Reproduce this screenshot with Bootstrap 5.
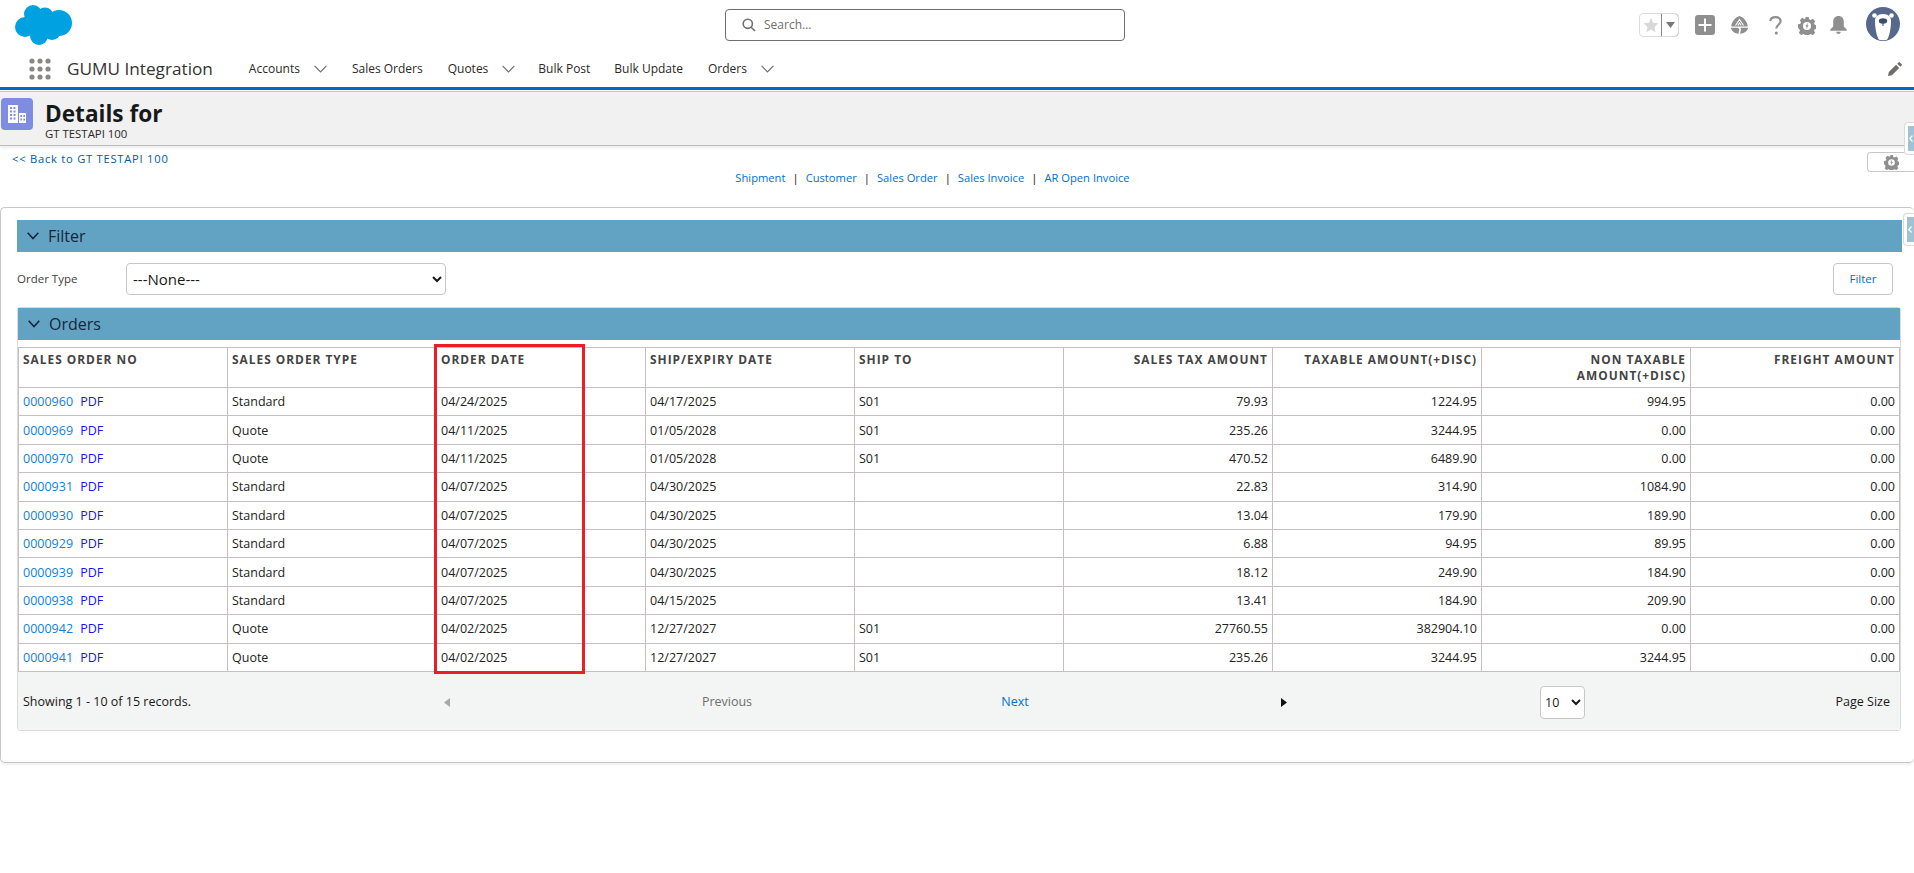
<!DOCTYPE html>
<html lang="en">
<head>
<meta charset="utf-8">
<title>Details for GT TESTAPI 100</title>
<link href="https://cdn.jsdelivr.net/npm/bootstrap@5.3.0/dist/css/bootstrap.min.css" rel="stylesheet">
<style>
html,body{background:#fff;overflow-x:hidden}
body{font-family:"Open Sans","Noto Sans",sans-serif;font-size:12.5px;color:#181818;position:relative;min-height:873px}
a{text-decoration:none}
.top-strip{height:50px;padding:5px 14px 0 15px}
.search-box{width:400px;height:32px;margin:4px 0 0 653px;border:1px solid #706e6b;border-radius:4px;padding-left:16px;color:#706e6b;font-size:12px;gap:8px}
.tools{margin-left:auto;height:40px}
.fav-box{width:40px;height:24px;border:1px solid #dddbda;border-radius:4px;margin:8px 16px 0 0;overflow:hidden}
.fav-box>span{flex:1 1 0}
.fav-box>span+span{border:1px solid #8a8886;border-radius:0 4px 4px 0;width:18px;flex:0 0 18px;margin:-1px -1px -1px 0}
.tool-gap{margin-top:10px}
.app-nav{height:40px;padding:0 12px 0 29px;border-bottom:3px solid #0066cc;color:#2b2826}
.app-name{font-size:17.2px;margin:0 36px 0 16px;color:#333}
.nav-entry{font-size:12px;color:#2b2826;margin-right:25px;white-space:nowrap}
.nav-entry svg{margin-left:14px}
.nav-tight{margin-right:23px}
.nav-tight-post{margin-right:24px}
.page-head{height:55px;margin-top:1px;background:#f1f1f1;border-top:1px solid #c9c7c5;border-bottom:1px solid #c0bebc;box-shadow:0 2px 3px rgba(0,0,0,.08);padding:6px 0 0 1px;gap:12px}
.obj-icon{width:32px;height:32px;background:#7f8de1;border-radius:4px}
.head-title{font-size:22.6px;font-weight:700;line-height:26px;color:#16191c;margin-top:3px}
.head-sub{font-size:11.4px;line-height:13px;color:#2b2826}
.back-row{padding:6px 0 0 12px;height:22px}
.back-link{font-size:11.2px;color:#015ba7;letter-spacing:.75px;line-height:14px}
.gear-btn{width:47px;height:20px;border:1px solid #c9c7c5;border-right:0;border-radius:4px 0 0 4px;background:#fff}
.rel-links{height:18px;line-height:18px;font-size:11.2px;color:#111;gap:7px;margin-top:1px;margin-bottom:-1px;padding-right:49px}
.rel-links a{color:#0070d2}
.main-card{margin-top:21px;border:1px solid #c9c7c5;border-radius:5px;border-right:0;height:556px;padding:12px 12px 0 16px;box-shadow:0 2px 2px rgba(0,0,0,.06)}
.sect-bar{height:32px;background:#62a3c4;color:#16263a;font-size:16px;padding-left:10px;gap:9px}
.filter-row{height:32px;margin-top:11px}
.field-name{width:109px;color:#3e3e3c;font-size:11.5px}
.type-select{width:320px;height:32px;border:1px solid #c9c7c5;border-radius:4px;background:#fff;font:15px "Open Sans",sans-serif;color:#181818;padding-left:2px}
.filter-btn{width:60px;height:32px;border:1px solid #c9c7c5;border-radius:4px;background:#fff;color:#0070d2;font-size:11.5px;margin-left:auto;margin-right:9px}
.orders-box{margin-top:12px;border:1px solid #dddbda;border-radius:3px;margin-right:1px;position:relative}
.grid-wrap{padding-top:7px;position:relative}
.orders-table{table-layout:fixed;width:100%;border-collapse:collapse;margin:0}
.orders-table th,.orders-table td{border:1px solid #c4bfc2;padding:0 4px;font-weight:400;color:#222;font-size:12.5px}
.orders-table th{height:40px;vertical-align:top;padding-top:3px;font-size:11.9px;font-weight:700;letter-spacing:1px;color:#444;line-height:16px;text-transform:uppercase}
.orders-table td{height:28.4px;vertical-align:middle;padding-top:2px}
.num-cell{text-align:right}
.so-link{color:#0f7fe0;margin-right:4px}
.pdf-link{color:#1414f0}
.order-mark{position:absolute;left:416px;top:4px;width:151px;height:330px;border:3px solid #ee1c25;pointer-events:none}
.pager{display:grid;grid-template-columns:420px 18px 542px 34px 504px 49px 1fr;height:58px;background:#f3f4f4;align-items:center;padding-top:3px}
.pager-count{padding-left:5px}
.pager-center{text-align:center}
.prev-text{color:#706e6b}
.next-text{color:#0070d2}
.size-select{width:45px;height:33px;margin-left:4px;border:1px solid #c9c7c5;border-radius:4px;background:#fff;font:12.5px "Open Sans",sans-serif;color:#181818}
.pager-size{text-align:right;padding-right:10px}
.side-tab{position:absolute;right:0;background:#fff;border:1px solid #dddbda;border-right:0;border-radius:4px 0 0 4px;width:10px;padding:3px 0 3px 3px}
.side-tab span{background:#9fc2d5;height:100%;padding-left:1px}
.tab-one{top:122px;height:33px}
.tab-two{top:213px;height:33px;width:11px}
</style>
</head>
<body>
<header class="d-flex top-strip">
  <svg width="57" height="40" viewBox="0 0 57 40" aria-label="Salesforce"><g fill="#00a1e0"><circle cx="18" cy="9" r="9"/><circle cx="30" cy="11" r="8.5"/><circle cx="44" cy="18" r="13"/><circle cx="10" cy="22" r="10"/><circle cx="24" cy="31" r="9"/><circle cx="37" cy="26" r="9"/><circle cx="25" cy="20" r="12"/></g></svg>
  <div class="d-flex align-items-center search-box">
    <svg width="14" height="14" viewBox="0 0 14 14" fill="none" stroke="#706e6b" stroke-width="1.6"><circle cx="5.8" cy="5.8" r="4.6"/><path d="M9.2 9.2 13 13"/></svg>
    <span>Search...</span>
  </div>
  <div class="d-flex tools">
    <div class="d-flex fav-box">
      <span class="d-flex align-items-center justify-content-center"><svg width="16" height="16" viewBox="0 0 16 16"><path fill="#d8d8d8" d="M8 .8l2.2 4.9 5.3.6-4 3.6 1.1 5.3L8 12.500l-4.600 2.700 1.100-5.300-4-3.600 5.300-.6z"/></svg></span>
      <span class="d-flex align-items-center justify-content-center"><svg width="9" height="6" viewBox="0 0 9 6"><path fill="#777" d="M0 0h9L4.500 6z"/></svg></span>
    </div>
    <svg class="tool-gap" style="margin-right:15px" width="20" height="20" viewBox="0 0 20 20"><rect width="20" height="20" rx="3" fill="#8f8f8f"/><path d="M10 3.500v13M3.500 10h13" stroke="#fff" stroke-width="2"/></svg>
    <svg class="tool-gap" style="margin-right:20px;margin-top:11px" width="19" height="18" viewBox="0 0 19 18"><path fill="#8f8f8f" d="M9.500 0c3 1 6.500 3.500 8 8.500.2 1 .2 1.500 0 2H1.500c-.2-.5-.2-1 0-2C3 3.500 6.500 1 9.500 0zM.8 11.800H8l1.300 1.500-.8 4.500C4.500 17.500 1.800 15.500.8 11.800zm9.700 0h7.700c-1 3.700-3.700 5.700-8.200 6l1-4.200z"/><path fill="none" stroke="#fff" stroke-width="1.100" d="M5.500 9.500 9.500 3.500l4 6M7.800 9.500l1.700-2.500 1.700 2.500"/></svg>
    <svg class="tool-gap" style="margin-right:16px;margin-top:11px" width="13" height="19" viewBox="0 0 13 19" fill="none"><path d="M1.300 5.200C1.500 2.500 3.500 1.200 6.400 1.200c3 0 5.200 1.500 5.200 4 0 3.500-4.300 3.600-4.300 7.200" stroke="#8f8f8f" stroke-width="2.200"/><circle cx="7.300" cy="17" r="1.600" fill="#8f8f8f"/></svg>
    <svg class="tool-gap" style="margin-right:13px;margin-top:12px" width="18" height="18" viewBox="0 0 18 18"><path fill="#8f8f8f" d="M7.300 0h3.400l.5 2.300 1.600.7 2-1.200 2.400 2.400-1.200 2 .7 1.600 2.300.5v3.400l-2.300.5-.7 1.600 1.200 2-2.400 2.400-2-1.200-1.600.7-.5 2.300H7.300l-.5-2.300-1.600-.7-2 1.200-2.400-2.400 1.200-2-.7-1.600L0 10.700V7.300l2.300-.5.700-1.600-1.200-2L4.200 .8l2 1.200 1.600-.7z"/><circle cx="9" cy="9" r="4" fill="#fff"/><path fill="#8f8f8f" d="M10 5.500 7.400 9.400h1.400L8 12.500l2.700-4.200H9.300z"/></svg>
    <svg class="tool-gap" style="margin-right:18px;margin-top:11px" width="19" height="18" viewBox="0 0 19 18"><path fill="#8f8f8f" d="M9.500 0c3.400 0 5.300 2.600 5.300 5.800v4.300c0 1.200 1.300 2 2.700 3.200.6.500.4 1.400-.4 1.400H1.900c-.8 0-1-.9-.4-1.400 1.400-1.200 2.700-2 2.700-3.200V5.800C4.200 2.600 6.100 0 9.500 0zM7.200 15.800h4.600c-.2 1.300-1.100 2.200-2.300 2.200s-2.100-.9-2.300-2.200z"/></svg>
    <svg style="margin-top:2px" width="34" height="34" viewBox="0 0 34 34"><circle cx="17" cy="17" r="17" fill="#56698c"/><circle cx="8.500" cy="8.500" r="2.300" fill="#fff"/><circle cx="25.500" cy="8.500" r="2.300" fill="#fff"/><path fill="#fff" d="M17 7c5.500 0 8 3 8 7 0 7-1.500 15-4 18.800-2.500.6-5.500.6-8 0C10.500 29 9 21 9 14c0-4 2.500-7 8-7z"/><ellipse cx="17" cy="14" rx="4.200" ry="2.800" fill="#3a4d6e"/><path d="M17 16v3" stroke="#3a4d6e" stroke-width="1"/></svg>
  </div>
</header>
<nav class="d-flex align-items-center app-nav">
  <svg width="22" height="22" viewBox="0 0 22 22" fill="#8a8886"><circle cx="3" cy="3" r="2.600"/><circle cx="11" cy="3" r="2.600"/><circle cx="19" cy="3" r="2.600"/><circle cx="3" cy="11" r="2.600"/><circle cx="11" cy="11" r="2.600"/><circle cx="19" cy="11" r="2.600"/><circle cx="3" cy="19" r="2.600"/><circle cx="11" cy="19" r="2.600"/><circle cx="19" cy="19" r="2.600"/></svg>
  <span class="app-name">GUMU Integration</span>
  <span class="nav-entry">Accounts<svg width="13" height="8" viewBox="0 0 13 8" fill="none" stroke="#706e6b" stroke-width="1.200"><path d="M.6.8 6.500 6.800 12.400.8"/></svg></span>
  <span class="nav-entry">Sales Orders</span>
  <span class="nav-entry nav-tight">Quotes<svg width="13" height="8" viewBox="0 0 13 8" fill="none" stroke="#706e6b" stroke-width="1.200"><path d="M.6.8 6.500 6.800 12.400.8"/></svg></span>
  <span class="nav-entry nav-tight-post">Bulk Post</span>
  <span class="nav-entry">Bulk Update</span>
  <span class="nav-entry">Orders<svg width="13" height="8" viewBox="0 0 13 8" fill="none" stroke="#706e6b" stroke-width="1.200"><path d="M.6.8 6.500 6.800 12.400.8"/></svg></span>
  <svg class="ms-auto" width="14" height="14" viewBox="0 0 14 14" fill="#706e6b"><path d="M10.500.4a1 1 0 0 1 1.400 0l1.700 1.700a1 1 0 0 1 0 1.400l-1.300 1.300-3.100-3.100zM8.100 2.800l3.100 3.100-7.300 7.300L0 14l.8-3.900z"/></svg>
</nav>
<section class="d-flex page-head">
  <div class="d-flex align-items-center justify-content-center obj-icon">
    <svg width="20" height="20" viewBox="0 0 20 20" fill="#fff"><path fill-rule="evenodd" d="M1 1h10v18H1zM3 3v2h2V3zm3.500 0v2h2V3zM3 6.500v2h2v-2zm3.500 0v2h2v-2zM3 10v2h2v-2zm3.500 0v2h2v-2zM3 13.500v2h2v-2zm3.500 0v2h2v-2zM12 9h7v10h-7zm1.300 2v2h1.700v-2zm3 0v2H18v-2zm-3 3.500v2h1.700v-2zm3 0v2H18v-2z"/></svg>
  </div>
  <div>
    <div class="head-title">Details for</div>
    <div class="head-sub">GT TESTAPI 100</div>
  </div>
</section>
<div class="d-flex justify-content-between back-row">
  <a class="back-link" href="#">&lt;&lt; Back to GT TESTAPI 100</a>
  <div class="d-flex align-items-center justify-content-center gear-btn">
    <svg width="15" height="15" viewBox="0 0 18 18"><path fill="#8f8f8f" d="M7.300 0h3.400l.5 2.300 1.600.7 2-1.200 2.400 2.400-1.200 2 .7 1.600 2.300.5v3.400l-2.300.5-.7 1.600 1.200 2-2.400 2.400-2-1.200-1.600.7-.5 2.300H7.300l-.5-2.300-1.600-.7-2 1.200-2.400-2.400 1.200-2-.7-1.600L0 10.700V7.300l2.300-.5.700-1.600-1.200-2L4.200 .8l2 1.200 1.600-.7z"/><circle cx="9" cy="9" r="4" fill="#fff"/><path fill="#8f8f8f" d="M10 5.500 7.400 9.400h1.400L8 12.500l2.700-4.200H9.300z"/></svg>
  </div>
</div>
<div class="d-flex justify-content-center rel-links">
  <a href="#">Shipment</a><span>|</span><a href="#">Customer</a><span>|</span><a href="#">Sales Order</a><span>|</span><a href="#">Sales Invoice</a><span>|</span><a href="#">AR Open Invoice</a>
</div>
<main class="main-card">
  <div class="d-flex align-items-center sect-bar">
    <svg width="12" height="8" viewBox="0 0 12 8" fill="none" stroke="#16263a" stroke-width="1.600"><path d="M.7.8 6 6.600 11.300.8"/></svg>
    <span>Filter</span>
  </div>
  <div class="d-flex align-items-center filter-row">
    <span class="field-name">Order Type</span>
    <select class="type-select"><option>---None---</option></select>
    <button type="button" class="filter-btn">Filter</button>
  </div>
  <div class="orders-box">
    <div class="d-flex align-items-center sect-bar">
      <svg width="12" height="8" viewBox="0 0 12 8" fill="none" stroke="#16263a" stroke-width="1.600"><path d="M.7.8 6 6.600 11.300.8"/></svg>
      <span>Orders</span>
    </div>
    <div class="grid-wrap">
      <table class="orders-table">
        <thead>
          <tr><th>Sales Order No</th><th>Sales Order Type</th><th>Order Date</th><th>Ship/Expiry Date</th><th>Ship To</th><th class="num-cell">Sales Tax Amount</th><th class="num-cell">Taxable Amount(+Disc)</th><th class="num-cell">Non Taxable Amount(+Disc)</th><th class="num-cell">Freight Amount</th></tr>
        </thead>
        <tbody>
          <tr><td><a class="so-link" href="#">0000960</a> <a class="pdf-link" href="#">PDF</a></td><td>Standard</td><td>04/24/2025</td><td>04/17/2025</td><td>S01</td><td class="num-cell">79.93</td><td class="num-cell">1224.95</td><td class="num-cell">994.95</td><td class="num-cell">0.00</td></tr>
          <tr><td><a class="so-link" href="#">0000969</a> <a class="pdf-link" href="#">PDF</a></td><td>Quote</td><td>04/11/2025</td><td>01/05/2028</td><td>S01</td><td class="num-cell">235.26</td><td class="num-cell">3244.95</td><td class="num-cell">0.00</td><td class="num-cell">0.00</td></tr>
          <tr><td><a class="so-link" href="#">0000970</a> <a class="pdf-link" href="#">PDF</a></td><td>Quote</td><td>04/11/2025</td><td>01/05/2028</td><td>S01</td><td class="num-cell">470.52</td><td class="num-cell">6489.90</td><td class="num-cell">0.00</td><td class="num-cell">0.00</td></tr>
          <tr><td><a class="so-link" href="#">0000931</a> <a class="pdf-link" href="#">PDF</a></td><td>Standard</td><td>04/07/2025</td><td>04/30/2025</td><td></td><td class="num-cell">22.83</td><td class="num-cell">314.90</td><td class="num-cell">1084.90</td><td class="num-cell">0.00</td></tr>
          <tr><td><a class="so-link" href="#">0000930</a> <a class="pdf-link" href="#">PDF</a></td><td>Standard</td><td>04/07/2025</td><td>04/30/2025</td><td></td><td class="num-cell">13.04</td><td class="num-cell">179.90</td><td class="num-cell">189.90</td><td class="num-cell">0.00</td></tr>
          <tr><td><a class="so-link" href="#">0000929</a> <a class="pdf-link" href="#">PDF</a></td><td>Standard</td><td>04/07/2025</td><td>04/30/2025</td><td></td><td class="num-cell">6.88</td><td class="num-cell">94.95</td><td class="num-cell">89.95</td><td class="num-cell">0.00</td></tr>
          <tr><td><a class="so-link" href="#">0000939</a> <a class="pdf-link" href="#">PDF</a></td><td>Standard</td><td>04/07/2025</td><td>04/30/2025</td><td></td><td class="num-cell">18.12</td><td class="num-cell">249.90</td><td class="num-cell">184.90</td><td class="num-cell">0.00</td></tr>
          <tr><td><a class="so-link" href="#">0000938</a> <a class="pdf-link" href="#">PDF</a></td><td>Standard</td><td>04/07/2025</td><td>04/15/2025</td><td></td><td class="num-cell">13.41</td><td class="num-cell">184.90</td><td class="num-cell">209.90</td><td class="num-cell">0.00</td></tr>
          <tr><td><a class="so-link" href="#">0000942</a> <a class="pdf-link" href="#">PDF</a></td><td>Quote</td><td>04/02/2025</td><td>12/27/2027</td><td>S01</td><td class="num-cell">27760.55</td><td class="num-cell">382904.10</td><td class="num-cell">0.00</td><td class="num-cell">0.00</td></tr>
          <tr><td><a class="so-link" href="#">0000941</a> <a class="pdf-link" href="#">PDF</a></td><td>Quote</td><td>04/02/2025</td><td>12/27/2027</td><td>S01</td><td class="num-cell">235.26</td><td class="num-cell">3244.95</td><td class="num-cell">3244.95</td><td class="num-cell">0.00</td></tr>
        </tbody>
      </table>
      <div class="order-mark"></div>
    </div>
    <div class="pager">
      <span class="pager-count">Showing 1 - 10 of 15 records.</span>
      <span class="pager-center"><svg width="6" height="9" viewBox="0 0 6 9"><path fill="#a8a8a8" d="M6 0v9L0 4.500z"/></svg></span>
      <span class="pager-center prev-text">Previous</span>
      <span class="pager-center next-text">Next</span>
      <span class="pager-center"><svg width="6" height="9" viewBox="0 0 6 9"><path fill="#111" d="M0 0v9l6-4.500z"/></svg></span>
      <select class="size-select"><option>10</option></select>
      <span class="pager-size">Page Size</span>
    </div>
  </div>
</main>
<div class="side-tab tab-one"><span class="d-flex align-items-center"><svg width="4" height="7" viewBox="0 0 4 7" fill="none" stroke="#fff" stroke-width="1.200"><path d="M3.500.5.800 3.500l2.700 3"/></svg></span></div>
<div class="side-tab tab-two"><span class="d-flex align-items-center"><svg width="4" height="7" viewBox="0 0 4 7" fill="none" stroke="#fff" stroke-width="1.200"><path d="M3.500.5.800 3.500l2.700 3"/></svg></span></div>
<script src="https://cdn.jsdelivr.net/npm/bootstrap@5.3.0/dist/js/bootstrap.bundle.min.js"></script>
</body>
</html>
